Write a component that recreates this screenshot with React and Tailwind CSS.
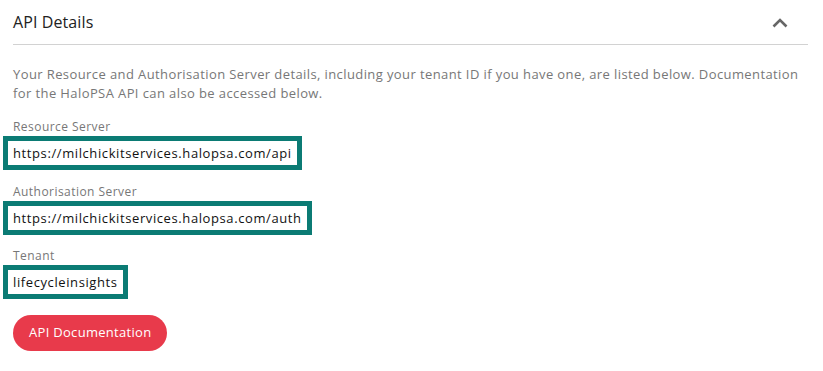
import React from 'react';

const Field = ({ label, value, className = '' }) => (
  <div className={className}>
    <div className="text-[12px] leading-[16px] tracking-[0.45px] text-[#777]">{label}</div>
    <div className="mt-[1px] -ml-[10px] inline-block border-[5px] border-[#0b7b74] bg-white pl-[5px] pr-[5px] text-[13px] leading-[24px] tracking-[0.6px] text-[#111]">
      {value}
    </div>
  </div>
);

const App = () => {
  return (
    <div className="w-[823px] h-[371px] overflow-hidden bg-white font-['Open_Sans',sans-serif]">
      <div className="pl-[13px] pr-[15px]">
        <div className="flex h-[45px] items-center justify-between border-b border-[#d2d2d2] pb-[1px]">
          <h2 className="text-[16px] tracking-[0.1px] text-[#222]">API Details</h2>
          <svg width="16" height="10" viewBox="0 0 16 10" className="mr-[20px] mt-[3px]">
            <polyline points="1.5,8.5 8,2 14.5,8.5" fill="none" stroke="#666" strokeWidth="2.6" />
          </svg>
        </div>

        <p className="mt-[20px] text-[13px] leading-[19px] tracking-[0.4px] text-[#777]">
          Your Resource and Authorisation Server details, including your tenant ID if you have one, are listed below. Documentation for the HaloPSA API can also be accessed below.
        </p>

        <Field className="mt-[16px]" label="Resource Server" value="https://milchickitservices.halopsa.com/api" />
        <Field className="mt-[14px]" label="Authorisation Server" value="https://milchickitservices.halopsa.com/auth" />
        <Field className="mt-[13px]" label="Tenant" value="lifecycleinsights" />

        <button className="mt-[16px] h-[36px] rounded-full bg-[#e83a4b] px-[16px] text-[13px] tracking-[0.3px] text-white">
          API Documentation
        </button>
      </div>
    </div>
  );
};

export default App;
